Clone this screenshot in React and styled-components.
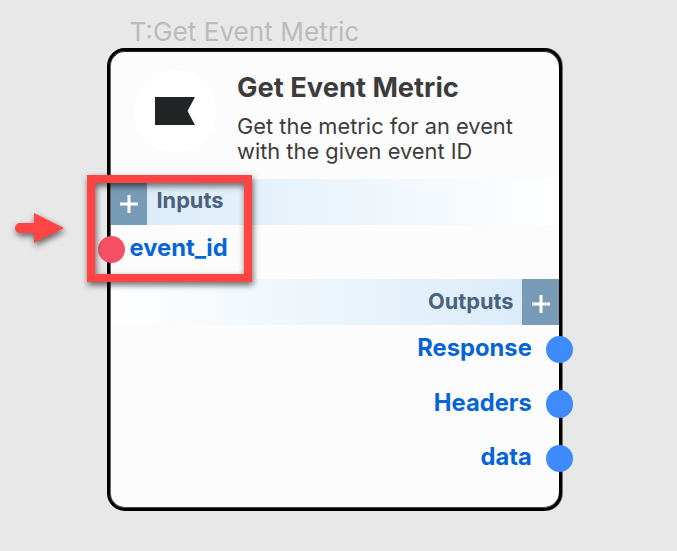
import React from 'react';
import styled, { createGlobalStyle } from 'styled-components';

const GlobalStyle = createGlobalStyle`
  * { box-sizing: border-box; }
  body { margin: 0; background: #e8e8e8; font-family: Inter, sans-serif; overflow: hidden; }
`;

const Canvas = styled.main`
  position: relative;
  width: 677px;
  height: 551px;
  padding: 16px 0 0 107px;
  background: #e8e8e8;
`;

const NodeLabel = styled.div`
  height: 32px;
  padding-left: 22.5px;
  font-size: 26.2px;
  line-height: 32px;
  color: #bbb;
  white-space: nowrap;
`;

const Node = styled.section`
  width: 455px;
  height: 463px;
  border: 3px solid #000;
  border-radius: 18px;
  background: #fcfcfc;
  box-shadow: inset 0 1px 0 #222, inset 1px 0 0 #666, inset 0 -1px 0 #444, 1px 0 0 #777;
  padding: 0 1px;
`;

const Header = styled.header`
  display: flex;
  height: 128px;
  padding: 19px 0 0 23px;
`;

const Logo = styled.div`
  display: flex;
  align-items: center;
  justify-content: center;
  width: 82px;
  height: 82px;
  border-radius: 50%;
  background: #fff;
`;

const Heading = styled.div`
  padding-left: 21px;
  color: #3c3c3c;
`;

const Title = styled.h1`
  margin: 0;
  font-size: 27.3px;
  font-weight: 700;
  line-height: 36px;
  white-space: nowrap;
`;

const Description = styled.p`
  margin: 8px 0 0;
  font-size: 21.85px;
  line-height: 25px;
  white-space: nowrap;
`;

const SectionBar = styled.div`
  display: flex;
  flex-direction: ${(p) => (p.$end ? 'row-reverse' : 'row')};
  height: 46px;
  background: linear-gradient(${(p) => (p.$end ? 'to left' : 'to right')}, #d8eaf8, #fff);
`;

const AddButton = styled.button`
  display: flex;
  align-items: center;
  justify-content: center;
  width: ${(p) => (p.$end ? 37 : 36)}px;
  padding: ${(p) => (p.$end ? '3px 0 0 1px' : '3px 0 0')};
  margin-right: ${(p) => (p.$end ? -1 : 0)}px;
  border: 0;
  background: #789bb7;
`;

const SectionName = styled.span`
  padding: ${(p) => (p.$end ? '0 8.5px' : '0 9.5px')};
  font-size: 21.75px;
  font-weight: 700;
  line-height: ${(p) => (p.$end ? 44 : 42)}px;
  color: #4a627d;
`;

const Port = styled.div`
  display: flex;
  align-items: center;
  flex-direction: ${(p) => (p.$end ? 'row-reverse' : 'row')};
  height: ${(p) => (p.$end ? 54.5 : 54)}px;
  margin: ${(p) => (p.$end ? '0 -15.3px 0 0' : '0 0 0 -13.5px')};
`;

const Dot = styled.span`
  width: 27.5px;
  height: 27.5px;
  margin-top: -5.5px;
  border-radius: 50%;
  background: ${(p) => (p.$end ? '#3d8bfd' : '#f55064')};
`;

const PortName = styled.span`
  margin: ${(p) => (p.$end ? '-8.5px 14px 0 0' : '-9px 0 0 4.5px')};
  font-size: 23.75px;
  font-weight: 700;
  line-height: 30px;
  color: #0565d8;
`;

const Highlight = styled.div`
  position: absolute;
  left: 87px;
  top: 175px;
  width: 165px;
  height: 107px;
  border: 8px solid #ff4444;
  filter: drop-shadow(1px 3px 3px rgba(0, 0, 0, 0.6));
`;

const Arrow = styled.svg`
  position: absolute;
  left: 8px;
  top: 205px;
  filter: drop-shadow(1px 3px 3px rgba(0, 0, 0, 0.6));
`;

const Plus = () => (
  <svg width="18" height="18" viewBox="0 0 18 18" aria-hidden="true">
    <path d="M9 0v18M0 9h18" stroke="#fff" strokeWidth="3" />
  </svg>
);

const Section = ({ name, end }) => (
  <SectionBar $end={end}>
    <AddButton $end={end} aria-label={`Add to ${name}`}><Plus /></AddButton>
    <SectionName $end={end}>{name}</SectionName>
  </SectionBar>
);

const PortRow = ({ name, end }) => (
  <Port $end={end}>
    <Dot $end={end} />
    <PortName $end={end}>{name}</PortName>
  </Port>
);

export default function App() {
  return (
    <>
      <GlobalStyle />
      <Canvas>
        <NodeLabel>T:Get Event Metric</NodeLabel>
        <Node>
          <Header>
            <Logo>
              <svg width="40" height="28" viewBox="0 0 40 28" aria-hidden="true">
                <path d="M0 0h40l-7.5 14L40 28H0z" fill="#232426" />
              </svg>
            </Logo>
            <Heading>
              <Title>Get Event Metric</Title>
              <Description>Get the metric for an event<br />with the given event ID</Description>
            </Heading>
          </Header>
          <Section name="Inputs" />
          <PortRow name="event_id" />
          <Section name="Outputs" end />
          {['Response', 'Headers', 'data'].map((name) => <PortRow key={name} name={name} end />)}
        </Node>
        <Highlight />
        <Arrow width="64" height="48" viewBox="0 0 64 48" aria-hidden="true">
          <path d="M12 18H26V8L56 23 26 38V28H12a5 5 0 0 1 0-10z" fill="#ff4444" />
        </Arrow>
      </Canvas>
    </>
  );
}
